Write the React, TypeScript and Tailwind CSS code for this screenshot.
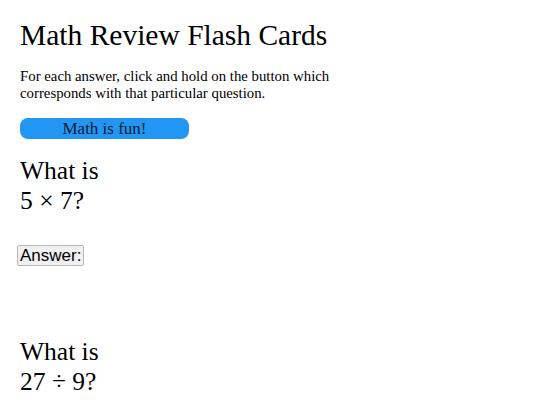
import React from "react";

const cards = [
  { question: "5 × 7?" },
  { question: "27 ÷ 9?" },
];

export default function App() {
  return (
    <div className="min-h-[405px] bg-white px-5 pt-[17px] font-['Liberation_Serif',serif] text-black">
      <h1 className="text-[29.5px] leading-[36px]">Math Review Flash Cards</h1>

      <p className="mt-[15px] w-[320px] text-[14.8px] leading-[17px]">
        For each answer, click and hold on the button which corresponds with
        that particular question.
      </p>

      <div className="mt-[16px] flex h-[21px] w-[169px] items-center justify-center rounded-[8px] bg-[#2196f3] text-[17px] leading-none text-[#0b1a33]">
        Math is fun!
      </div>

      <div className="flex flex-col items-start">
        {cards.map((card, i) => (
          <div
            key={card.question}
            className={`flex flex-col items-start ${i === 0 ? "mt-[17px]" : "mt-[71px]"}`}
          >
            <h2 className="text-[25.5px] leading-[30px]">
              What is
              <br />
              {card.question}
            </h2>
            {i === 0 && (
              <button className="ml-[-3px] mt-[29px] rounded-[2px] border border-[#b8b8b8] bg-[#f0f0f0] px-[2px] py-0 font-['Liberation_Sans',sans-serif] text-[17px] leading-[19px]">
                Answer:
              </button>
            )}
          </div>
        ))}
      </div>
    </div>
  );
}
